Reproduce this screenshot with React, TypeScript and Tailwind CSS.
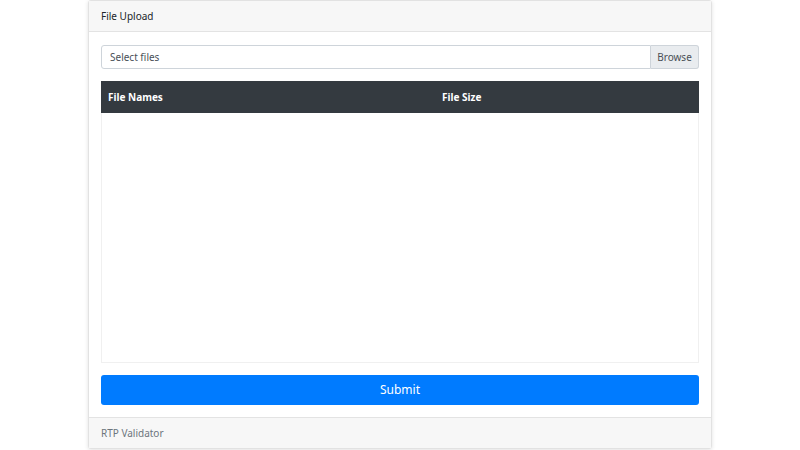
import React from "react";

export default function App() {
  return (
    <div
      className="w-full h-[450px] bg-white flex justify-center"
      style={{ fontFamily: '"Noto Sans", "Open Sans", sans-serif' }}
    >
      <div className="w-[624px] h-[449px] border border-[#e2e2e2] rounded-[3px] shadow-[0_1px_4px_rgba(0,0,0,0.12)] flex flex-col bg-white">
        <div className="h-[31px] shrink-0 px-[12px] bg-[#f7f7f7] border-b border-[#e3e3e3] flex items-center text-[10px] text-[#212529]">
          File Upload
        </div>
        <div className="flex-1 px-[12px] pt-[13px] pb-[12px] flex flex-col">
          <div className="h-[24px] flex text-[10px]">
            <div className="flex-1 border border-[#ced4da] rounded-l-[3px] flex items-center px-[8px] text-[#495057]">
              Select files
            </div>
            <div className="w-[48px] bg-[#e9ecef] border border-l-0 border-[#ced4da] rounded-r-[3px] flex items-center justify-center text-[#495057]">
              Browse
            </div>
          </div>
          <div className="mt-[12px] h-[32px] bg-[#343a40] grid grid-cols-[341px_1fr] text-white font-bold text-[10px] items-center">
            <div className="pl-[7px]">File Names</div>
            <div>File Size</div>
          </div>
          <div className="h-[250px] border border-t-0 border-[#f0f0f0]"></div>
          <button className="mt-[12px] h-[30px] bg-[#007bff] rounded-[3px] text-white text-[12px] flex items-center justify-center">
            Submit
          </button>
        </div>
        <div className="h-[31px] shrink-0 px-[12px] bg-[#f7f7f7] border-t border-[#e3e3e3] flex items-center text-[10px] text-[#6c757d]">
          RTP Validator
        </div>
      </div>
    </div>
  );
}
